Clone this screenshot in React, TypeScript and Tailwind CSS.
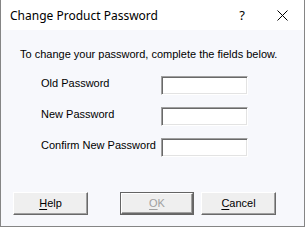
import React from "react";

const fields = ["Old Password", "New Password", "Confirm New Password"];

function Button({
  label,
  mnemonic,
  disabled,
  isDefault,
  width,
}: {
  label: string;
  mnemonic: number;
  disabled?: boolean;
  isDefault?: boolean;
  width: string;
}) {
  const inner = (
    <div className="flex h-full w-full items-center justify-center border-t border-l border-t-white border-l-white border-r border-b border-r-[#696969] border-b-[#696969] bg-[#efefef] shadow-[inset_-1px_-1px_0_#a0a0a0]">
      <span className={disabled ? "text-[#a0a0a0]" : "text-black"}>
        {label.slice(0, mnemonic)}
        <span className="underline underline-offset-[2px]">{label[mnemonic]}</span>
        {label.slice(mnemonic + 1)}
      </span>
    </div>
  );
  return (
    <button
      className={`h-[23px] ${width} ${isDefault ? "border border-[#646464]" : ""}`}
      disabled={disabled}
    >
      {inner}
    </button>
  );
}

export default function App() {
  return (
    <div
      className="flex h-[227px] w-[305px] flex-col border-x border-b border-[#858585] text-[11px] leading-[13px] text-black"
      style={{ fontFamily: '"Liberation Sans", Arial, sans-serif' }}
    >
      {/* title bar */}
      <div className="flex h-[30px] items-center bg-white">
        <span
          className="ml-[9px] text-[12px] text-black"
          style={{ fontFamily: '"Noto Sans", sans-serif' }}
        >
          Change Product Password
        </span>
        <span
          className="ml-auto mr-[32px] text-[13px]"
          style={{ fontFamily: '"Noto Sans", sans-serif' }}
        >
          ?
        </span>
        <svg className="mr-[16px]" width="11" height="11" viewBox="0 0 11 11">
          <path d="M0.5 0.5 L10.5 10.5 M10.5 0.5 L0.5 10.5" stroke="#000" strokeWidth="1" />
        </svg>
      </div>

      {/* body */}
      <div className="flex flex-1 flex-col bg-[#f7f8fc] pt-[18px]">
        <p className="pl-[19px]">To change your password, complete the fields below.</p>

        <div className="mt-[15px] flex flex-col gap-[12px]">
          {fields.map((f) => (
            <div key={f} className="flex items-start">
              <label className="w-[160px] shrink-0 whitespace-nowrap pl-[40px] pt-[1px]">{f}</label>
              <input
                type="password"
                className="h-[19px] w-[87px] border-t border-l border-t-[#a0a0a0] border-l-[#a0a0a0] border-r border-b border-r-white border-b-white bg-white shadow-[inset_1px_1px_0_#696969,inset_-1px_-1px_0_#e3e3e3] outline-none"
              />
            </div>
          ))}
        </div>

        <div className="mt-[35px] flex items-start pl-[12px]">
          <Button label="Help" mnemonic={0} width="w-[75px]" />
          <div className="ml-[32px]">
            <Button label="OK" mnemonic={0} disabled isDefault width="w-[74px]" />
          </div>
          <div className="ml-[7px]">
            <Button label="Cancel" mnemonic={0} width="w-[75px]" />
          </div>
        </div>
      </div>
    </div>
  );
}
